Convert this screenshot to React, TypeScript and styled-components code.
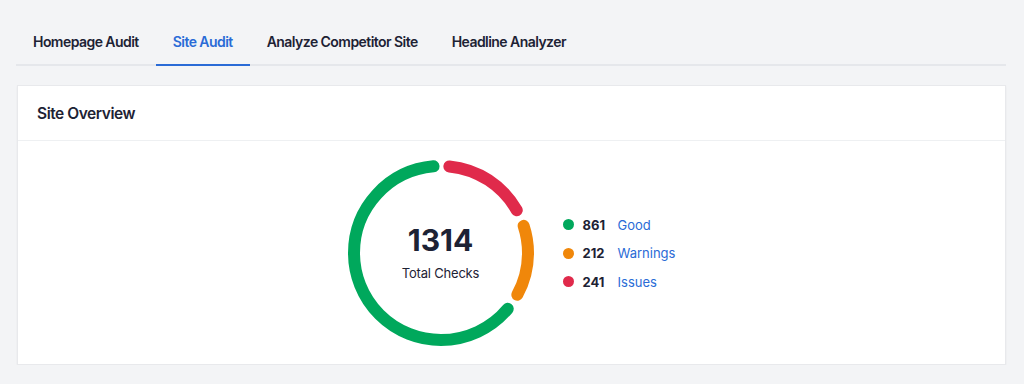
import React from 'react'
import styled, { createGlobalStyle } from 'styled-components'

const GlobalStyle = createGlobalStyle`
  body {
    margin: 0;
    background: #f3f4f6;
    font-family: Inter, 'Liberation Sans', sans-serif;
    color: #1d2234;
  }
`

const Page = styled.div`
  padding: 20px 18px 0 16px;
`

const Tabs = styled.nav`
  display: flex;
  border-bottom: 2px solid #e5e7eb;
`

const Tab = styled.a<{ $active?: boolean }>`
  display: block;
  padding: 12px 17px 12px;
  font-size: 14px;
  line-height: 20px;
  font-weight: 600;
  letter-spacing: -0.55px;
  color: ${({ $active }) => ($active ? '#2a6bd6' : '#1d2234')};
  border-bottom: 2px solid ${({ $active }) => ($active ? '#2a6bd6' : 'transparent')};
  margin-bottom: -2px;
  cursor: pointer;
`

const Card = styled.section`
  margin: 19px 0 0 1px;
  background: #fff;
  border: 1px solid #e8e9ec;
  box-shadow: 0 1px 2px rgba(0, 0, 0, 0.05);
`

const CardHeader = styled.header`
  height: 54px;
  display: flex;
  align-items: center;
  padding: 0 19px;
  border-bottom: 1px solid #eef0f2;
  font-size: 15.5px;
  font-weight: 600;
  letter-spacing: -0.45px;
`

const CardBody = styled.div`
  display: flex;
  justify-content: center;
  align-items: center;
  gap: 29px;
  padding: 19px 0 18px;
`

const Donut = styled.div`
  position: relative;
  width: 186px;
  height: 186px;
`

const Center = styled.div`
  position: absolute;
  inset: 0;
  display: flex;
  flex-direction: column;
  align-items: center;
  justify-content: center;
  padding-bottom: 2px;
  .total {
    font-size: 30px;
    font-weight: 700;
    line-height: 34px;
    letter-spacing: 0;
  }
  .label {
    margin-top: 8px;
    font-size: 13px;
    line-height: 16px;
    letter-spacing: -0.2px;
  }
`

const Legend = styled.ul`
  list-style: none;
  margin: 0;
  padding: 0;
  display: grid;
  grid-template-columns: 11px 26px auto;
  column-gap: 9px;
  row-gap: 8.5px;
  align-items: center;
  li {
    display: contents;
  }
`

const Dot = styled.span<{ $color: string }>`
  width: 11px;
  height: 11px;
  border-radius: 50%;
  background: ${({ $color }) => $color};
`

const Count = styled.span`
  font-size: 13px;
  line-height: 20px;
  font-weight: 700;
`

const LegendLink = styled.a`
  font-size: 13px;
  line-height: 20px;
  color: #2a6bd6;
  cursor: pointer;
`

const items = [
  { count: 241, label: 'Issues', color: '#e02a4b' },
  { count: 212, label: 'Warnings', color: '#f0870a' },
  { count: 861, label: 'Good', color: '#00a85c' },
]

const R = 87
const C = 2 * Math.PI * R
const GAP = 17

const Ring = () => {
  const total = items.reduce((s, i) => s + i.count, 0)
  let start = 0
  return (
    <svg width="186" height="186" viewBox="0 0 186 186">
      <g transform="rotate(-90 93 93)">
        {items.map((item) => {
          const len = (item.count / total) * C
          const seg = (
            <circle
              key={item.label}
              cx="93"
              cy="93"
              r={R}
              fill="none"
              stroke={item.color}
              strokeWidth="12"
              strokeLinecap="round"
              strokeDasharray={`${len - GAP} ${C}`}
              strokeDashoffset={-(start + GAP / 2)}
            />
          )
          start += len
          return seg
        })}
      </g>
    </svg>
  )
}

const legendOrder = [items[2], items[1], items[0]]

export default function App() {
  return (
    <>
      <GlobalStyle />
      <Page>
        <Tabs>
          <Tab>Homepage Audit</Tab>
          <Tab $active>Site Audit</Tab>
          <Tab>Analyze Competitor Site</Tab>
          <Tab>Headline Analyzer</Tab>
        </Tabs>
        <Card>
          <CardHeader>Site Overview</CardHeader>
          <CardBody>
            <Donut>
              <Ring />
              <Center>
                <div className="total">1314</div>
                <div className="label">Total Checks</div>
              </Center>
            </Donut>
            <Legend>
              {legendOrder.map((item) => (
                <li key={item.label}>
                  <Dot $color={item.color} />
                  <Count>{item.count}</Count>
                  <LegendLink>{item.label}</LegendLink>
                </li>
              ))}
            </Legend>
          </CardBody>
        </Card>
      </Page>
    </>
  )
}
